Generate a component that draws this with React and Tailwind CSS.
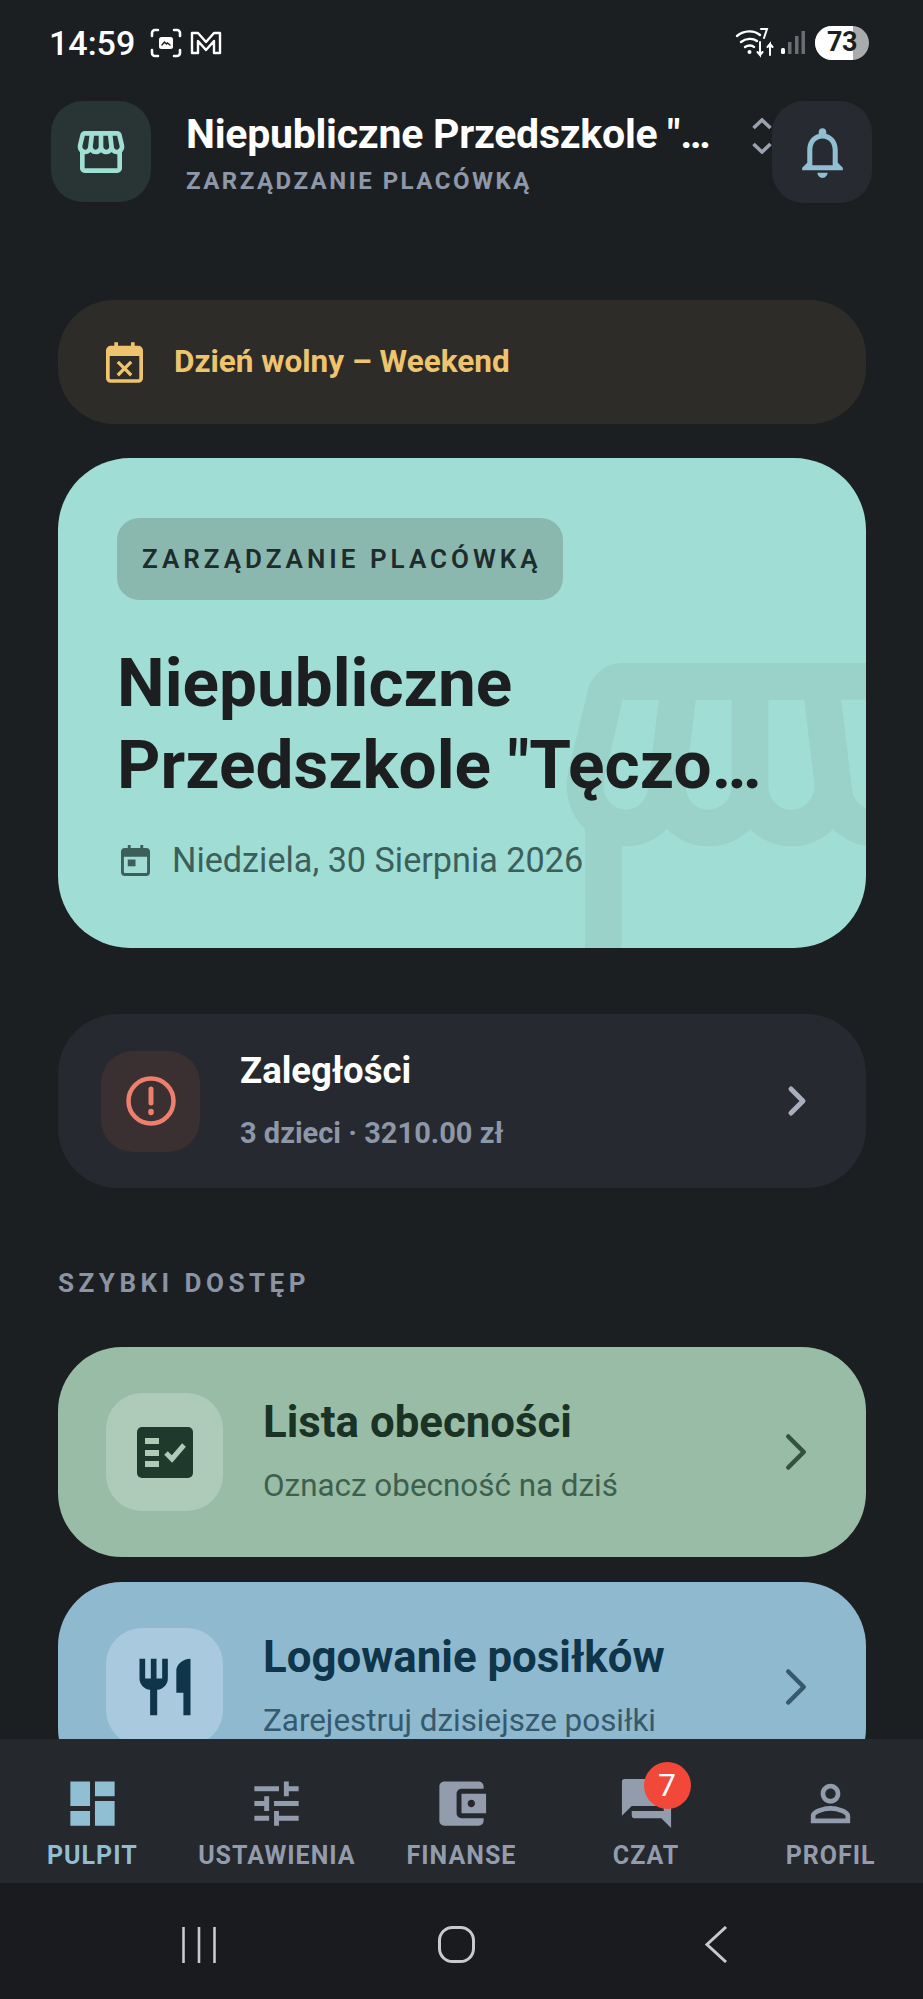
import React from 'react';
import { ChevronRight } from 'lucide-react';

const F = '[font-family:Roboto,sans-serif]';
const STORE = "M21.9 8.89l-1.05-4.37c-.22-.9-1-1.52-1.91-1.52H5.05c-.9 0-1.69.63-1.9 1.52L2.1 8.89c-.24 1.02-.02 2.06.62 2.88.08.11.19.19.28.29V19c0 1.1.9 2 2 2h14c1.1 0 2-.9 2-2v-6.94c.09-.09.2-.18.28-.28.64-.82.87-1.87.62-2.89zm-2.99-3.9l1.05 4.37c.1.42.01.84-.25 1.17-.14.18-.44.47-.94.47-.61 0-1.14-.49-1.21-1.14L16.98 5l1.93-.01zM13 5h1.96l.54 4.52c.05.39-.07.78-.33 1.07-.22.26-.54.41-.95.41-.67 0-1.22-.59-1.22-1.31V5zM8.49 9.52L9.04 5H11v4.69c0 .72-.55 1.31-1.29 1.31-.34 0-.65-.15-.89-.41-.25-.29-.37-.68-.33-1.07zm-4.45-.16L5.05 5h1.97l-.58 4.86c-.08.65-.6 1.14-1.21 1.14-.49 0-.8-.29-.93-.47-.27-.32-.36-.75-.26-1.17zM5 19v-6.03c.08.01.15.03.23.03.87 0 1.66-.36 2.24-.95.6.6 1.4.95 2.31.95.87 0 1.65-.36 2.23-.93.59.57 1.39.93 2.29.93.84 0 1.64-.35 2.24-.95.58.59 1.37.95 2.24.95.08 0 .15-.02.23-.03V19H5z";
const BELL = "M12 22c1.1 0 2-.9 2-2h-4c0 1.1.9 2 2 2zm6-6v-5c0-3.07-1.63-5.64-4.5-6.32V4c0-.83-.67-1.5-1.5-1.5s-1.5.67-1.5 1.5v.68C7.64 5.36 6 7.92 6 11v5l-2 2v1h16v-1l-2-2zm-2 1H8v-6c0-2.48 1.51-4.5 4-4.5s4 2.02 4 4.5v6z";
const RESTAURANT = "M11 9H9V2H7v7H5V2H3v7c0 2.12 1.66 3.84 3.75 3.97V22h2.5v-9.03C11.34 12.84 13 11.12 13 9V2h-2v7zm5-3v8h2.5v8H21V2c-2.76 0-5 2.24-5 4z";
const DASHBOARD = "M3 13h8V3H3v10zm0 8h8v-6H3v6zm10 0h8V11h-8v10zm0-18v6h8V3h-8z";
const TUNE = "M3 17v2h6v-2H3zM3 5v2h10V5H3zm10 16v-2h8v-2h-8v-2h-2v6h2zM7 9v2H3v2h4v2h2V9H7zm14 4v-2H11v2h10zm-6-4h2V7h4V5h-4V3h-2v6z";
const WALLET = "M21 18v1c0 1.1-.9 2-2 2H5c-1.11 0-2-.9-2-2V5c0-1.1.89-2 2-2h14c1.1 0 2 .9 2 2v1h-9c-1.11 0-2 .9-2 2v8c0 1.1.89 2 2 2h9zm-9-2h10V8H12v8zm4-2.5c-.83 0-1.5-.67-1.5-1.5s.67-1.5 1.5-1.5 1.5.67 1.5 1.5-.67 1.5-1.5 1.5z";
const FORUM = "M21 6h-2v9H6v2c0 .55.45 1 1 1h11l4 4V7c0-.55-.45-1-1-1zm-4 6V3c0-.55-.45-1-1-1H3c-.55 0-1 .45-1 1v14l4-4h10c.55 0 1-.45 1-1z";
const PERSON = "M12 5.9c1.16 0 2.1.94 2.1 2.1s-.94 2.1-2.1 2.1S9.9 9.16 9.9 8s.94-2.1 2.1-2.1m0 9c2.97 0 6.1 1.46 6.1 2.1v1.1H5.9V17c0-.64 3.13-2.1 6.1-2.1M12 4C9.79 4 8 5.79 8 8s1.79 4 4 4 4-1.79 4-4-1.79-4-4-4zm0 9c-2.67 0-8 1.34-8 4v3h16v-3c0-2.66-5.33-4-8-4z";

const Mi = ({ d, size, color, className = '' }) => (
  <svg width={size} height={size} viewBox="0 0 24 24" fill={color} className={className}><path d={d} /></svg>
);

const NavItem = ({ label, active, d, children }) => (
  <div className="flex-1 flex flex-col items-center">
    <div className="h-[59px] w-[59px] relative">
      <Mi d={d} size={59} color={active ? '#90bfd3' : '#939cad'} />
      {children}
    </div>
    <span className={`mt-[8px] text-[25px] leading-[30px] font-bold tracking-[1px] ${active ? 'text-[#90bfd3]' : 'text-[#939cad]'}`}>{label}</span>
  </div>
);

const ActionCard = ({ bg, box, title, sub, titleColor, subColor, icon, chevron }) => (
  <div className={`h-[210px] shrink-0 rounded-[64px] flex items-center pl-[48px] pr-[39px] ${bg}`}>
    <div className={`w-[117px] h-[118px] rounded-[36px] flex items-center justify-center shrink-0 ${box}`}>{icon}</div>
    <div className="ml-[40px] flex-1 -mt-[4px]">
      <div className={`text-[43.8px] leading-[52px] font-bold ${titleColor}`}>{title}</div>
      <div className={`mt-[19px] text-[31.4px] leading-[38px] ${subColor}`}>{sub}</div>
    </div>
    <ChevronRight size={62} strokeWidth={1.75} color={chevron} />
  </div>
);

export default function App() {
  return (
    <div className={`w-[923px] h-[1999px] bg-[#1c1f22] flex flex-col overflow-hidden ${F}`}>
      {/* status bar */}
      <div className="h-[84px] shrink-0 flex items-center pl-[49px] pr-[54px] pt-[1px] text-white">
        <span className="text-[34px] leading-none font-medium">14:59</span>
        <svg width="32" height="30" viewBox="0 0 32 30" className="ml-[15px]" fill="none" stroke="#fff" strokeWidth="2.6" strokeLinecap="round">
          <path d="M2 8V5a3 3 0 0 1 3-3h3M24 2h3a3 3 0 0 1 3 3v3M30 22v3a3 3 0 0 1-3 3h-3M8 28H5a3 3 0 0 1-3-3v-3" />
          <rect x="9" y="9" width="14" height="12" rx="2.5" fill="#fff" stroke="none" />
          <path d="M12 17l2.5-3 2 2 1-1 2.5 2" stroke="#1c1f22" strokeWidth="1.4" />
        </svg>
        <svg width="32" height="24" viewBox="0 0 32 24" className="ml-[8px]" fill="none" stroke="#fff" strokeWidth="2.4" strokeLinejoin="round">
          <path d="M2 2h6l8 9 8-9h6v20h-6V10l-8 9-8-9v12H2z" />
        </svg>
        <div className="flex-1" />
        <svg width="42" height="32" viewBox="0 0 42 32" fill="none" stroke="#fff" strokeWidth="2.4" strokeLinecap="round">
          <path d="M2 9c7-6 17-6 23-1M6 15c5-4 12-4 16-1M10 20c3-2 7-2 9 0" />
          <circle cx="14.5" cy="25" r="2" fill="#fff" stroke="none" />
          <path d="M26 2h6l-3 9M25 15v13l-2.5-3M25 28l2.5-3M35 28V17l-2.5 3M35 17l2.5 3" strokeWidth="2" />
        </svg>
        <svg width="24" height="24" viewBox="0 0 24 24" className="ml-[4px]">
          <rect x="0" y="17" width="4" height="6" rx="1.5" fill="#fff" />
          <rect x="7" y="11" width="3.5" height="12" fill="#6a6d72" />
          <rect x="14" y="5" width="3.5" height="18" fill="#6a6d72" />
          <rect x="20.5" y="0" width="3.5" height="23" fill="#6a6d72" />
        </svg>
        <div className="ml-[10px] relative w-[54px] h-[34px] rounded-[17px] bg-[#a9abad] overflow-hidden flex items-center justify-center">
          <div className="absolute left-0 top-0 bottom-0 w-[38px] bg-white" />
          <span className="relative text-[27px] leading-none font-bold text-[#1c1f22] tracking-[-0.5px]">73</span>
        </div>
      </div>

      {/* app header */}
      <div className="h-[118px] shrink-0 flex items-start pt-[17px] pl-[51px] pr-[51px]">
        <div className="w-[100px] h-[101px] rounded-[32px] bg-[#293435] flex items-center justify-center shrink-0">
          <Mi d={STORE} size={56} color="#a0dfd3" />
        </div>
        <div className="ml-[35px] w-[567px] min-w-0 pt-[8px]">
          <div className="text-[41px] leading-[50px] font-bold text-white tracking-[-0.25px] whitespace-nowrap">Niepubliczne Przedszkole "…</div>
          <div className="mt-[7px] text-[24px] leading-[30px] font-bold text-[#8f98a9] tracking-[2.5px]">ZARZĄDZANIE PLACÓWKĄ</div>
        </div>
        <svg width="20" height="36" viewBox="0 0 20 36" fill="none" stroke="#9aa2b0" strokeWidth="3.6" className="mt-[17px] shrink-0">
          <path d="M1.5 10L10 2l8.5 8M1.5 26l8.5 8 8.5-8" />
        </svg>
        <div className="w-[100px] h-[102px] rounded-[32px] bg-[#272a31] flex items-center justify-center shrink-0">
          <Mi d={BELL} size={61} color="#90bfd3" />
        </div>
      </div>

      {/* scroll content */}
      <div className="flex-1 min-h-0 overflow-hidden pl-[58px] pr-[57px] pt-[98px] flex flex-col">
        <div className="h-[124px] shrink-0 rounded-[56px] bg-[#2e2c29] flex items-center pl-[48px]">
          <svg width="37" height="41" viewBox="0 0 40 44" fill="#eec46f">
            <path fillRule="evenodd" d="M9 0h4v4h14V0h4v4h4a5 5 0 0 1 5 5v30a5 5 0 0 1-5 5H5a5 5 0 0 1-5-5V9a5 5 0 0 1 5-5h4V0zM4 15v24a1 1 0 0 0 1 1h30a1 1 0 0 0 1-1V15H4z" />
            <path d="M14 20l6 6 6-6 2.5 2.5-6 6 6 6L26 37l-6-6-6 6-2.5-2.5 6-6-6-6z" />
          </svg>
          <span className="ml-[31px] text-[31.5px] font-bold text-[#eec46f]">Dzień wolny – Weekend</span>
        </div>

        <div className="relative h-[490px] shrink-0 mt-[34px] rounded-[72px] bg-[#a0ddd4] overflow-hidden pl-[59px] pt-[60px]">
          <div className="absolute left-[472px] top-[150px]">
            <Mi d={STORE} size={440} color="#9ad1c8" />
          </div>
          <div className="relative inline-flex items-center h-[82px] pl-[25px] pr-[21px] rounded-[22px] bg-[#8ab8af]">
            <span className="text-[26px] font-semibold text-[#1f2c2c] tracking-[4px]">ZARZĄDZANIE PLACÓWKĄ</span>
          </div>
          <div className="relative mt-[42px] text-[67.5px] leading-[82px] font-bold text-[#1c1e20]">Niepubliczne<br />Przedszkole "Tęczo…</div>
          <div className="relative mt-[34px] flex items-center pl-[4px]">
            <svg width="29" height="31" viewBox="0 0 30 32" fill="#3d5f5c">
              <path fillRule="evenodd" d="M7 0h3v3h10V0h3v3h3a4 4 0 0 1 4 4v21a4 4 0 0 1-4 4H4a4 4 0 0 1-4-4V7a4 4 0 0 1 4-4h3V0zM3 12v16a1 1 0 0 0 1 1h22a1 1 0 0 0 1-1V12H3z" />
              <rect x="7" y="15" width="8" height="7" />
            </svg>
            <span className="ml-[22px] text-[34.2px] leading-[40px] text-[#3d5f5c]">Niedziela, 30 Sierpnia 2026</span>
          </div>
        </div>

        <div className="h-[174px] shrink-0 mt-[66px] rounded-[60px] bg-[#26292f] flex items-center pl-[43px] pr-[45px]">
          <div className="w-[99px] h-[101px] rounded-[32px] bg-[#3a2f31] flex items-center justify-center shrink-0">
            <svg width="52" height="52" viewBox="0 0 52 52" fill="none" stroke="#ee7f6c" strokeWidth="4.5" strokeLinecap="round">
              <circle cx="26" cy="26" r="22.5" />
              <path d="M26 14v14" strokeWidth="5" />
              <path d="M26 36.5v1" strokeWidth="5.5" />
            </svg>
          </div>
          <div className="ml-[40px] flex-1 -mt-[4px]">
            <div className="text-[36.5px] leading-[44px] font-bold text-white">Zaległości</div>
            <div className="mt-[23px] text-[29px] leading-[34px] font-bold text-[#8d97a8]">3 dzieci · 3210.00 zł</div>
          </div>
          <ChevronRight size={48} color="#a7afbc" strokeWidth={2.5} />
        </div>

        <div className="mt-[79px] text-[26px] leading-[32px] font-bold tracking-[4.5px] text-[#8a94a5]">SZYBKI DOSTĘP</div>

        <div className="mt-[48px] flex flex-col gap-[25px]">
          <ActionCard
            bg="bg-[#98bca5]" box="bg-[#aecbb9]" titleColor="text-[#1a3325]" subColor="text-[#3f5f4e]" chevron="#35523f"
            title="Lista obecności" sub="Oznacz obecność na dziś"
            icon={<svg width="56" height="51" viewBox="0 0 56 51"><rect width="56" height="51" rx="5" fill="#1f3a2c" /><path d="M8 11h14v6H8zM8 23h14v6H8zM8 34h14v6H8z" fill="#aecbb9" /><path d="M29 26l6 6 12-14" fill="none" stroke="#aecbb9" strokeWidth="5" /></svg>}
          />
          <ActionCard
            bg="bg-[#8fb9cf]" box="bg-[#a9cade]" titleColor="text-[#0e3549]" subColor="text-[#35596d]" chevron="#35596d"
            title="Logowanie posiłków" sub="Zarejestruj dzisiejsze posiłki"
            icon={<Mi d={RESTAURANT} size={68} color="#0e3549" />}
          />
        </div>
      </div>

      {/* bottom nav */}
      <div className="h-[144px] shrink-0 bg-[#25282d] flex pt-[35px]">
        <NavItem label="PULPIT" active d={DASHBOARD} />
        <NavItem label="USTAWIENIA" d={TUNE} />
        <NavItem label="FINANSE" d={WALLET} />
        <NavItem label="CZAT" d={FORUM}>
          <span className="absolute -top-[12px] left-[27px] w-[47px] h-[47px] rounded-full bg-[#f2483a] text-white text-[32px] leading-[47px] text-center">7</span>
        </NavItem>
        <NavItem label="PROFIL" d={PERSON} />
      </div>

      {/* system nav */}
      <div className="h-[116px] shrink-0 bg-[#1a1b1f] flex items-center pl-[182px] pt-[7px]">
        <svg width="34" height="36" viewBox="0 0 34 36" stroke="#c9c9cb" strokeWidth="2.6"><path d="M1.5 0v36M17 0v36M32.5 0v36" /></svg>
        <svg width="37" height="37" viewBox="0 0 37 37" fill="none" stroke="#c9c9cb" strokeWidth="3" className="ml-[222px]"><rect x="1.5" y="1.5" width="34" height="34" rx="13" /></svg>
        <svg width="24" height="37" viewBox="0 0 24 37" fill="none" stroke="#c9c9cb" strokeWidth="3" className="ml-[229px]"><path d="M22 1L3 18.5 22 36" /></svg>
      </div>
    </div>
  );
}
